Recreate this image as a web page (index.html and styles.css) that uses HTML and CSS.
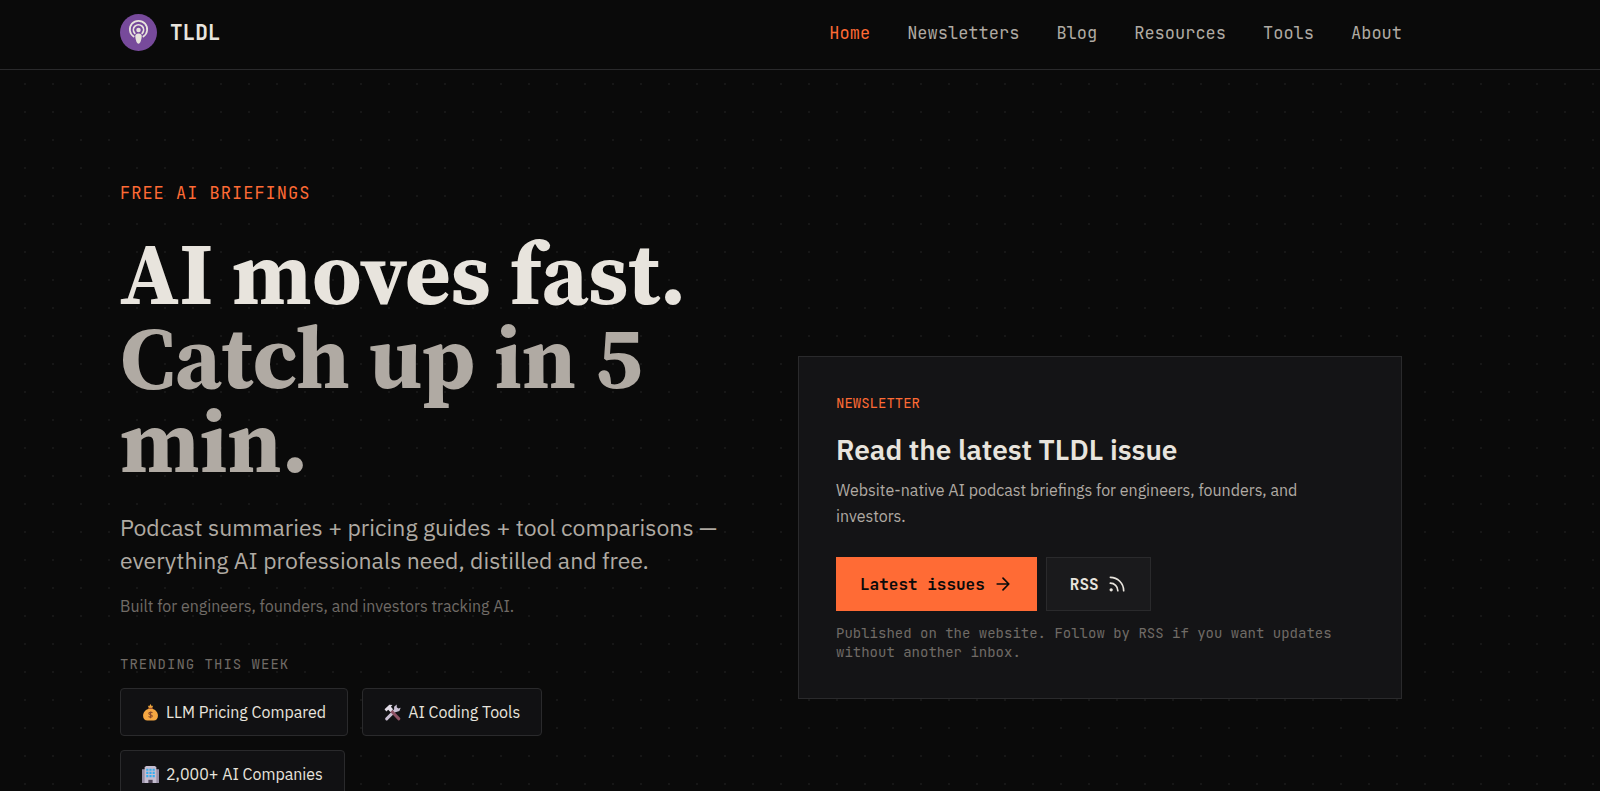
FILE: index.html
```html
<!DOCTYPE html>
<html lang="en">
<head>
  <meta charset="UTF-8" />
  <meta name="viewport" content="width=device-width, initial-scale=1.0" />
  <title>TLDL</title>
  <link rel="stylesheet" href="styles.css">
</head>
<body>
  <header class="site-header">
    <a href="#" class="brand">
      <svg class="brand-logo" viewBox="0 0 38 38" aria-hidden="true">
        <circle cx="19" cy="19" r="19" fill="#774a9b"/>
        <g fill="none" stroke="#e8e4dd" stroke-width="1.8" stroke-linecap="round">
          <path d="M14 23.200A8.900 8.900 0 1 1 24 23.200"/>
          <path d="M15.200 19.800A5.200 5.200 0 1 1 22.800 19.800"/>
        </g>
        <circle cx="19" cy="16.500" r="2.300" fill="#e8e4dd"/>
        <path d="M19 20c2.600 0 3.600 1.300 3.300 3.600-.3 2.200-1.300 6.900-3.300 6.900s-3-4.700-3.300-6.900c-.3-2.300.7-3.600 3.300-3.600z" fill="#e8e4dd"/>
      </svg>
      <span>TLDL</span>
    </a>
    <nav class="nav">
      <a href="#" class="active">Home</a>
      <a href="#">Newsletters</a>
      <a href="#">Blog</a>
      <a href="#">Resources</a>
      <a href="#">Tools</a>
      <a href="#">About</a>
    </nav>
  </header>

  <main class="hero">
    <section class="intro">
      <p class="eyebrow">FREE AI BRIEFINGS</p>
      <h1>AI moves fast. <span>Catch up in 5 min.</span></h1>
      <p class="lead">Podcast summaries + pricing guides + tool comparisons — everything AI professionals need, distilled and free.</p>
      <p class="built">Built for engineers, founders, and investors tracking AI.</p>
      <p class="trending">TRENDING THIS WEEK</p>
      <div class="chips">
        <a href="#" class="chip">
          <svg viewBox="0 0 16 16" aria-hidden="true">
            <path d="M5.500 1.500l1.300.5L8 0l1.200 2 1.300-.5L9.500 4h-3z" fill="#f0a63c"/>
            <path d="M6.300 4.500h3.400c3.200 1 5.300 3.500 5.300 6.500 0 3-1.700 4.500-4 4.500H5c-2.300 0-4-1.500-4-4.500 0-3 2.100-5.500 5.300-6.500z" fill="#f5a742"/>
            <path d="M6 3.500h4v1.200H6z" fill="#a8562f"/>
            <path d="M9.800 8.300c-.8-1-3.400-.8-3.400.6s3.300.9 3.300 2.400-2.600 1.500-3.500.4M8 7v6.500" fill="none" stroke="#8a4b2b"/>
          </svg>
          LLM Pricing Compared
        </a>
        <a href="#" class="chip">
          <svg viewBox="0 0 16 16" aria-hidden="true">
            <path d="M2.500 14l8-8" stroke="#c9bfd2" stroke-width="2.800" stroke-linecap="round"/>
            <path d="M9.500 5.500V2.500L12 .5V3l1.500 1.300 2.200-.8L14.500 6.500 11.500 7.500z" fill="#c9bfd2"/>
            <path d="M7 6.500l7 7.500" stroke="#8d5264" stroke-width="2.800" stroke-linecap="round"/>
            <path d="M.5 5L5 .8l3 .2-1.500 1.500L8.500 5 6 7.500 4 5.300 2.200 7z" fill="#e3dde8"/>
          </svg>
          AI Coding Tools
        </a>
        <a href="#" class="chip">
          <svg viewBox="0 0 16 16" aria-hidden="true">
            <path d="M0 3h3v13H0zM13 3h3v13h-3z" fill="#9990a6"/>
            <path d="M2.500 1L4 0h8l1.500 1v15h-11z" fill="#c5bdd0"/>
            <path d="M4 2.500h2v2H4zM7 2.500h2v2H7zM10 2.500h2v2h-2zM4 5.500h2v2H4zM7 5.500h2v2H7zM10 5.500h2v2h-2zM4 8.500h2v2H4zM7 8.500h2v2H7zM10 8.500h2v2h-2z" fill="#35aef0"/>
            <path d="M6 13h4v3H6z" fill="#4a4052"/>
          </svg>
          2,000+ AI Companies
        </a>
      </div>
    </section>

    <section class="card">
      <p class="card-label">NEWSLETTER</p>
      <h2>Read the latest TLDL issue</h2>
      <p class="card-text">Website-native AI podcast briefings for engineers, founders, and investors.</p>
      <div class="actions">
        <a href="#" class="button primary">
          Latest issues
          <svg viewBox="0 0 24 24" aria-hidden="true"><path d="M5 12h14M12 5l7 7-7 7"/></svg>
        </a>
        <a href="#" class="button">
          RSS
          <svg viewBox="0 0 24 24" aria-hidden="true"><path d="M4 11a9 9 0 0 1 9 9M4 4a16 16 0 0 1 16 16"/><circle cx="5" cy="19" r="1"/></svg>
        </a>
      </div>
      <p class="note">Published on the website. Follow by RSS if you want updates without another inbox.</p>
    </section>
  </main>
</body>
</html>
```
FILE: styles.css
```css
:root {
  --bg: #0a0a0a;
  --panel: #141416;
  --chip: #111113;
  --border: #2a2a2c;
  --text: #e8e4dd;
  --soft: #b0aaa3;
  --muted: #706b66;
  --accent: #ff6b35;
  --mono: "JetBrains Mono", "DejaVu Sans Mono", monospace;
  --sans: "IBM Plex Sans", Roboto, sans-serif;
  --serif: "Source Serif 4", "Liberation Serif", serif;
}
* {
  box-sizing: border-box;
}
body {
  margin: 0;
  background-color: var(--bg);
  background-image: radial-gradient(circle at 1px 1px, #171717 1px, transparent 1px);
  background-size: 28px 28px;
  background-position: 24px 27px;
  color: var(--text);
  font-family: var(--sans);
}
h1, h2, p {
  margin: 0;
}
a {
  color: inherit;
  text-decoration: none;
}
.site-header {
  display: flex;
  justify-content: space-between;
  align-items: center;
  height: 70px;
  padding: 0 198px 5px 120px;
  background: var(--bg);
  border-bottom: 1px solid var(--border);
  font-family: var(--mono);
}
.brand {
  display: flex;
  align-items: center;
  gap: 13px;
  font-size: 21px;
  font-weight: bold;
}
.brand-logo {
  width: 37px;
  height: 37px;
}
.nav {
  display: flex;
  gap: 37px;
  padding-top: 2px;
  color: var(--soft);
  font-size: 17px;
}
.nav .active {
  color: var(--accent);
}
.hero {
  display: grid;
  grid-template-columns: 1fr 1fr;
  gap: 74px;
  align-items: center;
  padding: 111px 198px 0 120px;
}
.intro {
  padding-bottom: 76px;
}
.eyebrow {
  color: var(--accent);
  font-family: var(--mono);
  font-size: 17px;
  line-height: 24px;
  letter-spacing: 1px;
}
h1 {
  margin-top: 26px;
  font-family: var(--serif);
  font-size: 88px;
  line-height: 84px;
}
h1 span {
  display: block;
  color: var(--soft);
}
.lead {
  margin-top: 28px;
  color: var(--soft);
  font-size: 23px;
  line-height: 33px;
}
.built {
  margin-top: 17px;
  color: var(--muted);
  font-size: 16px;
  line-height: 24px;
}
.trending {
  margin-top: 36px;
  color: var(--muted);
  font-family: var(--mono);
  font-size: 14px;
  line-height: 20px;
  letter-spacing: 1px;
}
.chips {
  display: flex;
  flex-wrap: wrap;
  gap: 14px;
  margin-top: 14px;
}
.chip {
  display: flex;
  align-items: center;
  gap: 7px;
  height: 48px;
  padding: 0 21px;
  background: var(--chip);
  border: 1px solid var(--border);
  border-radius: 4px;
  font-size: 16px;
}
.chip svg {
  width: 17px;
  height: 17px;
}
.card {
  padding: 36px 37px;
  background: var(--panel);
  border: 1px solid var(--border);
}
.card-label {
  color: var(--accent);
  font-family: var(--mono);
  font-size: 14px;
  line-height: 20px;
}
h2 {
  margin-top: 19px;
  font-size: 28px;
  font-weight: 600;
  line-height: 36px;
}
.card-text {
  margin-top: 9px;
  color: var(--soft);
  font-size: 16px;
  line-height: 26px;
}
.actions {
  display: flex;
  gap: 9px;
  margin-top: 28px;
}
.button {
  display: flex;
  align-items: center;
  gap: 8px;
  height: 54px;
  padding: 0 23px;
  background: #1a1a1c;
  border: 1px solid var(--border);
  font-family: var(--mono);
  font-size: 16px;
  font-weight: 600;
}
.button.primary {
  background: var(--accent);
  border-color: var(--accent);
  color: var(--bg);
}
.button svg {
  width: 20px;
  height: 20px;
  fill: none;
  stroke: currentColor;
  stroke-width: 2;
  stroke-linecap: round;
  stroke-linejoin: round;
}
.note {
  margin-top: 13px;
  color: var(--muted);
  font-family: var(--mono);
  font-size: 14px;
  line-height: 19px;
}
```
